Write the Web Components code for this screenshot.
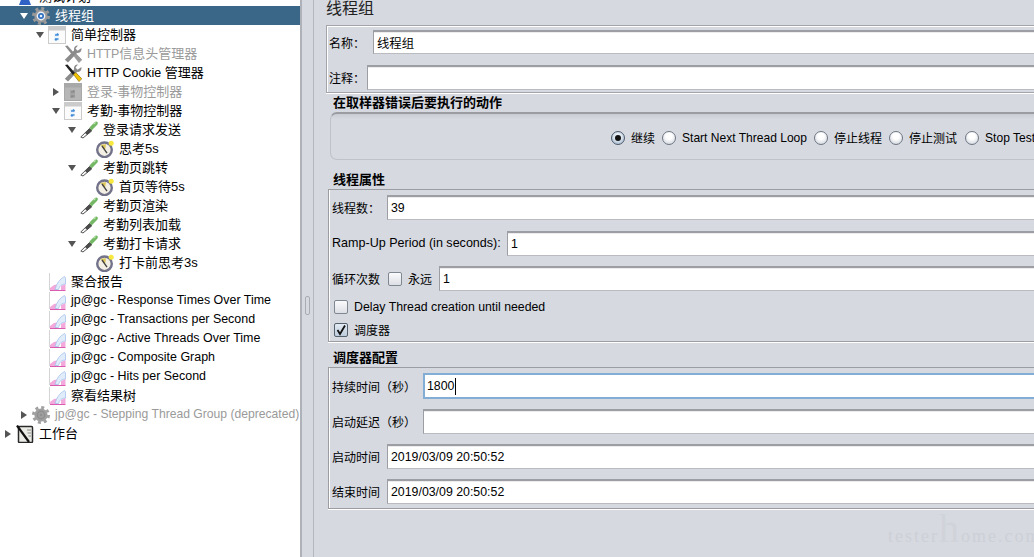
<!DOCTYPE html>
<html lang="zh">
<head>
<meta charset="utf-8">
<title>线程组</title>
<style>
  html, body { margin: 0; height: 100%; overflow: hidden; background: #d6d9e0; }
  body {
    display: flex;
    font: 12px "Liberation Sans", "Noto Sans CJK SC", sans-serif;
    color: #000;
  }
  .lat { font-size: 12.4px; }
</style>
</head>
<body>
<jm-tree>
  <tree-row lvl="0" icon="plan">测试计划</tree-row>
  <tree-row lvl="1" icon="gear" arrow="open" selected>线程组</tree-row>
  <tree-row lvl="2" icon="ctrl" arrow="open">简单控制器</tree-row>
  <tree-row lvl="3" icon="tools" disabled><span class="lat">HTTP</span>信息头管理器</tree-row>
  <tree-row lvl="3" icon="tools"><span class="lat">HTTP Cookie</span> 管理器</tree-row>
  <tree-row lvl="3" icon="ctrl" arrow="closed" disabled>登录-事物控制器</tree-row>
  <tree-row lvl="3" icon="ctrl" arrow="open">考勤-事物控制器</tree-row>
  <tree-row lvl="4" icon="pipette" arrow="open">登录请求发送</tree-row>
  <tree-row lvl="5" icon="timer">思考5s</tree-row>
  <tree-row lvl="4" icon="pipette" arrow="open">考勤页跳转</tree-row>
  <tree-row lvl="5" icon="timer">首页等待5s</tree-row>
  <tree-row lvl="4" icon="pipette">考勤页渲染</tree-row>
  <tree-row lvl="4" icon="pipette">考勤列表加载</tree-row>
  <tree-row lvl="4" icon="pipette" arrow="open">考勤打卡请求</tree-row>
  <tree-row lvl="5" icon="timer">打卡前思考3s</tree-row>
  <tree-row lvl="2" icon="graph">聚合报告</tree-row>
  <tree-row lvl="2" icon="graph" style="font-size:12.45px">jp@gc - Response Times Over Time</tree-row>
  <tree-row lvl="2" icon="graph" style="font-size:12.45px">jp@gc - Transactions per Second</tree-row>
  <tree-row lvl="2" icon="graph" style="font-size:12.45px">jp@gc - Active Threads Over Time</tree-row>
  <tree-row lvl="2" icon="graph" style="font-size:12.45px">jp@gc - Composite Graph</tree-row>
  <tree-row lvl="2" icon="graph" style="font-size:12.45px">jp@gc - Hits per Second</tree-row>
  <tree-row lvl="2" icon="graph">察看结果树</tree-row>
  <tree-row lvl="1" icon="gear" arrow="closed" disabled style="font-size:12.15px">jp@gc - Stepping Thread Group (deprecated)</tree-row>
  <tree-row lvl="0" icon="bench" arrow="closed">工作台</tree-row>
</jm-tree>
<jm-splitter></jm-splitter>
<thread-form></thread-form>

<script>
// icons for the tree, all on an 18x18 box
const icons = {
  plan: `<path d="M3 17 L15 17 L12 9 L6 9 Z" fill="#2f62c4"/><circle cx="9" cy="6" r="3.5" fill="#3a6fd0"/>`,
  gear: `<circle cx="9" cy="9" r="7.6" fill="none" stroke="COL1" stroke-width="2.8" stroke-dasharray="3 2.97"/>
         <circle cx="9" cy="9" r="6.6" fill="COL1"/>
         <circle cx="9" cy="9" r="4.4" fill="COL2"/>
         <circle cx="9" cy="9" r="3" fill="COL3"/>
         <circle cx="9" cy="9" r="1.3" fill="COL2"/>`,
  ctrl: `<rect x=".5" y=".5" width="17" height="17" fill="COL4" stroke="COL5"/>
         <rect x="1" y="1" width="16" height="3.5" fill="COL5"/>
         <rect x="6" y="7" width="5" height="8" fill="COLA"/>
         <path d="M7 9 h3.5 M10.5 9 l-1.5 -1.5 M7 13 h3.5 M7 13 l1.5 1.5" stroke="COL6" stroke-width="1.6" fill="none"/>`,
  tools: `<path d="M14 .5 L11.5 3.5 L13.5 5.8 L17.5 3 Q18 8 13 8 L4 17.5 L.8 14.8 L10 5.5 Q9.5 .5 14 .5 Z" fill="#8b8b8b"/>
          <path d="M1 1 L3.5 .5 L11 9 L9 11 Z" fill="COL7"/>
          <path d="M9.5 10.5 L11.8 8.6 L17.8 14.8 L15 17.6 Z" fill="COL8" stroke="COL9" stroke-width=".6"/>`,
  pipette: `<path d="M.8 16 L9.5 7.5 L11.8 9.8 L3 17 Z" fill="#f6f6f6" stroke="#555" stroke-width="1"/>
            <path d="M5 12 L9.5 7.5 L11.8 9.8 L7.2 14 Z" fill="#4b4b4b"/>
            <path d="M9.5 6.5 L14 1.8 Q16.4 -.2 17.6 1.2 Q18.6 3 16 5 L11.5 9.5 Z" fill="#74b765"/>
            <path d="M13.5 3 L15.5 1.4" stroke="#c4e8b6" stroke-width="1.3"/>`,
  timer: `<circle cx="8.5" cy="9.8" r="7.3" fill="#f3efe4" stroke="#72728a" stroke-width="2.4"/>
          <path d="M4.5 4.8 L10 4.3 L9 10.3 Z" fill="#dcc657"/>
          <path d="M8.9 10.2 L6 6 M8.9 10.2 L11 13.2" stroke="#444" stroke-width="1.4"/>
          <circle cx="15.2" cy="3.2" r="2.5" fill="#f6e93c"/>`,
  graph: `<path d="M1.5 .5 V17" stroke="#aaa" stroke-dasharray="1 1"/>
          <path d="M2 17 H9 L12 11 L6 12 L2 15 Z" fill="#f4a9dc"/>
          <path d="M13 17 H17.5 V11 L13 13 Z" fill="#f4a9dc"/>
          <path d="M7 16.5 Q9.5 7 16.5 3.5 L17.5 5 V11 Q12 11 10.5 16.5 Z" fill="#e1ecfb" stroke="#9dbdea" stroke-width=".7"/>
          <path d="M2 17.5 H17.5" stroke="#d95cae"/>`,
  bench: `<rect x="2.5" y="1.5" width="14" height="16" rx="1" fill="#ecece7" stroke="#2a2a2a" stroke-width="1.5"/>
          <path d="M11 5 h4 M11.5 8 h3.5 M12.5 11 h2.5" stroke="#888"/>
          <path d="M1 .5 L13 17" stroke="#111" stroke-width="2.2"/>`
};

function iconSvg(name, disabled) {
  const on = { COL1:'#9a9a9a', COL2:'#eaf0f7', COL3:'#2f6fc0', COL4:'#fbfbfb', COL5:'#cbcbcb', COL6:'#3f8bd6', COL7:'#222', COL8:'#f2c200', COL9:'#7a6200', COLA:'#eef4fb' };
  const off = { COL1:'#a0a0a0', COL2:'#8f8f8f', COL3:'#a0a0a0', COL4:'#b6b6b6', COL5:'#a8a8a8', COL6:'#8c8c8c', COL7:'#8b8b8b', COL8:'#9a9a9a', COL9:'#8a8a8a', COLA:'#a4a4a4' };
  const map = disabled ? off : on;
  const body = icons[name].replace(/COL[0-9A]/g, c => map[c]);
  return `<svg width="18" height="18" viewBox="0 0 18 18" aria-hidden="true">${body}</svg>`;
}

// 1. Tree
class JmTree extends HTMLElement {
  constructor() {
    super();
    this.attachShadow({ mode: 'open' });
    this.shadowRoot.innerHTML = `
      <style>
        :host { display: block; flex: 0 0 300px; height: 100%; background: #fff; overflow: hidden; }
        .rows { display: flex; flex-direction: column; margin-top: -13px; }
      </style>
      <div class="rows"><slot></slot></div>`;
  }
}
customElements.define('jm-tree', JmTree);

// 2. One row of the tree
class TreeRow extends HTMLElement {
  constructor() {
    super();
    this.attachShadow({ mode: 'open' });
  }
  connectedCallback() {
    const lvl = +this.getAttribute('lvl');
    const arrow = this.getAttribute('arrow');
    const disabled = this.hasAttribute('disabled');
    const tri = arrow === 'open'
      ? `<svg width="10" height="10"><path d="M1 2 H9 L5 8 Z" fill="COLOR"/></svg>`
      : arrow === 'closed'
        ? `<svg width="10" height="10"><path d="M2 1 V9 L8 5 Z" fill="COLOR"/></svg>` : '';
    const triColor = this.hasAttribute('selected') ? '#fff' : '#555';
    this.shadowRoot.innerHTML = `
      <style>
        :host {
          display: flex; align-items: center; height: 19px; flex: none;
          padding-left: ${lvl * 16}px; white-space: nowrap;
          font: 13px "Liberation Sans", "Noto Sans CJK SC", sans-serif;
          color: #000;
        }
        :host([selected]) { background: #3a6787; color: #fff; }
        :host([disabled]) { color: #9a9a9a; }
        .arrow { width: 16px; height: 19px; display: flex; align-items: center; justify-content: center; flex: none; }
        .icon { width: 18px; height: 18px; margin-right: 5px; flex: none; }
        .text { padding-bottom: 2px; }
        svg { display: block; }
      </style>
      <span class="arrow">${tri.replace('COLOR', triColor)}</span>
      <span class="icon">${iconSvg(this.getAttribute('icon'), disabled)}</span>
      <span class="text"><slot></slot></span>`;
  }
}
customElements.define('tree-row', TreeRow);

// 3. Splitter
class JmSplitter extends HTMLElement {
  constructor() {
    super();
    this.attachShadow({ mode: 'open' });
    this.shadowRoot.innerHTML = `
      <style>
        :host {
          display: flex; align-items: center; justify-content: center;
          flex: 0 0 14px; height: 100%; box-sizing: border-box;
          border-left: 2px solid #aeb1b7; border-right: 1px solid #b4b7bd;
          background: #d6d9e0;
        }
        .grip { width: 3px; height: 17px; border: 1px solid #a9acb3; border-radius: 2px; margin-top: 54px; }
      </style>
      <div class="grip"></div>`;
  }
}
customElements.define('jm-splitter', JmSplitter);

// 4. Text field with its label
class JmField extends HTMLElement {
  constructor() {
    super();
    this.attachShadow({ mode: 'open' });
  }
  connectedCallback() {
    const value = this.getAttribute('value') || '';
    const labelW = this.getAttribute('label-w') || '55';
    this.shadowRoot.innerHTML = `
      <style>
        :host { display: flex; align-items: center; height: 25px; }
        :host([focused]) { height: 26px; }
        .label { flex: 0 0 ${labelW}px; white-space: nowrap; }
        .input {
          flex: 1; height: 100%; box-sizing: border-box; background: #fff;
          border: 1px solid #b9bbc0; border-top: 2px solid #9c9ea3;
          border-left-color: #9c9ea3; box-shadow: inset 0 1px 0 #ececec;
          padding: 0 0 0 3px; display: flex; align-items: center; white-space: nowrap;
          font-size: 12.35px;
        }
        :host([focused]) .input { border: 2px solid #82aed6; box-shadow: none; padding-left: 2px; }
        .caret { display: inline-block; width: 1px; height: 17px; background: #000; margin-left: 1px; }
      </style>
      <span class="label"><slot></slot></span>
      <div class="input">${value}${this.hasAttribute('focused') ? '<span class="caret"></span>' : ''}</div>`;
  }
}
customElements.define('jm-field', JmField);

// 5. Radio and checkbox
class JmRadio extends HTMLElement {
  constructor() {
    super();
    this.attachShadow({ mode: 'open' });
    this.shadowRoot.innerHTML = `
      <style>
        :host { display: inline-flex; align-items: center; gap: 6px; white-space: nowrap; }
        .dot {
          width: 14px; height: 14px; box-sizing: border-box; border-radius: 50%; flex: none;
          border: 1px solid #6d7682; background: radial-gradient(circle at 50% 35%, #fff 30%, #dfe2e8 70%, #b4bac4);
          display: flex; align-items: center; justify-content: center;
        }
        :host([checked]) .dot { background: radial-gradient(circle at 50% 40%, #eaf0f7 30%, #a9bdd2 80%); border-color: #4e5b6b; }
        :host([checked]) .dot::after { content: ''; width: 6px; height: 6px; border-radius: 50%; background: #111; }
        .t { padding-bottom: 1px; }
      </style>
      <span class="dot"></span><span class="t"><slot></slot></span>`;
  }
}
customElements.define('jm-radio', JmRadio);

class JmCheck extends HTMLElement {
  constructor() {
    super();
    this.attachShadow({ mode: 'open' });
  }
  connectedCallback() {
    const mark = this.hasAttribute('checked')
      ? `<svg width="12" height="12" viewBox="0 0 12 12"><path d="M2.5 6 L5 10 L10 1.5" fill="none" stroke="#111" stroke-width="1.8"/></svg>` : '';
    this.shadowRoot.innerHTML = `
      <style>
        :host { display: inline-flex; align-items: center; gap: 6px; white-space: nowrap; }
        .box {
          width: 14px; height: 14px; box-sizing: border-box; border: 1px solid #7f8791; border-radius: 2px; flex: none;
          background: linear-gradient(#fbfbfc, #dcdfe5); display: flex; align-items: center; justify-content: center;
        }
        :host([checked]) .box { background: linear-gradient(#e4ebf3, #bccbdc); border-color: #55606d; }
        .t { padding-bottom: 1px; }
      </style>
      <span class="box">${mark}</span><span class="t"><slot></slot></span>`;
  }
}
customElements.define('jm-check', JmCheck);

// 6. Titled etched box
class JmSection extends HTMLElement {
  constructor() {
    super();
    this.attachShadow({ mode: 'open' });
    const title = this.getAttribute('heading') || '';
    this.shadowRoot.innerHTML = `
      <style>
        :host { display: block; margin-left: 2px; }
        h3 { margin: 0 0 0 5px; font-size: 13px; line-height: 18px; height: 18px; font-weight: 700; }
        .box {
          border: 1px solid #9b9da2; box-shadow: 0 1px 0 #fff, inset 1px 0 0 #fff;
          border-right: 0; padding: 5px 0 4px 3px;
          display: flex; flex-direction: column; gap: var(--gap, 10px);
        }
      </style>
      <h3>${title}</h3>
      <div class="box"><slot></slot></div>`;
  }
}
customElements.define('jm-section', JmSection);

// 7. The whole right side
class ThreadForm extends HTMLElement {
  constructor() {
    super();
    this.attachShadow({ mode: 'open' });
    this.shadowRoot.innerHTML = `
      <style>
        :host {
          display: block; flex: none; width: 740px; height: 100%;
          padding-left: 12px; box-sizing: border-box; position: relative;
          white-space: nowrap;
        }
        h2 { margin: 0; font-size: 16px; font-weight: 400; line-height: 18px; height: 25px; color: #222; }
        .names {
          border: 1px solid #a2a4a9; box-shadow: inset 1px 1px 0 #fff, 0 1px 0 #fff;
          border-right: 0; height: 68px; box-sizing: border-box;
          padding: 4px 0 0 2px; display: flex; flex-direction: column; gap: 11px;
        }
        .names .short { height: 24px; }
        .error { margin-top: 1px; }
        .error h3 { margin: 0 0 0 7px; font-size: 13px; line-height: 18px; height: 18px; }
        .rounded {
          margin-left: 4px; height: 48px; border-radius: 7px 0 0 7px; border: 1px solid #bfc2c8; border-right: 0;
          border-top: 2px solid #9a9ca1; background: linear-gradient(#c9ccd3 0, #d6d9e0 5px);
          display: flex; align-items: center; padding: 3px 0 0 280px; box-sizing: border-box;
          gap: 7px;
        }
        .lat { font-size: 12.05px; }
        .last { margin-left: 1px; }
        .props { margin-top: 11px; }
        .sched { margin-top: 7px; }
        .row { display: flex; align-items: center; height: 25px; gap: 8px; }
        .row jm-field { flex: 1; margin-left: -1px; }
        .plain { height: 14px; margin: -1.5px 0 0 2px; display: flex; align-items: center; }
        .delay { font-size: 12.3px; }
        .ramp { font-size: 12.55px; }
        .mark {
          position: absolute; left: 574px; top: 502px; font: 18px "Liberation Serif", serif;
          letter-spacing: 2px; color: #cdd0d7; line-height: 54px;
        }
        .mark span { font-size: 40px; color: #d0d3da; }
      </style>
      <h2>线程组</h2>
      <div class="names">
        <jm-field class="short" value="线程组" label-w="44">名称：</jm-field>
        <jm-field value="" label-w="38">注释：</jm-field>
      </div>
      <div class="error">
        <h3>在取样器错误后要执行的动作</h3>
        <div class="rounded">
          <jm-radio checked>继续</jm-radio>
          <jm-radio class="lat">Start Next Thread Loop</jm-radio>
          <jm-radio>停止线程</jm-radio>
          <jm-radio>停止测试</jm-radio>
          <jm-radio class="lat last">Stop Test Now</jm-radio>
        </div>
      </div>
      <jm-section heading="线程属性" class="props" style="--gap:10.5px">
        <jm-field value="39">线程数：</jm-field>
        <jm-field value="1" label-w="175" class="ramp">Ramp-Up Period (in seconds):</jm-field>
        <div class="row">
          <span>循环次数</span>
          <jm-check>永远</jm-check>
          <jm-field value="1" label-w="0"></jm-field>
        </div>
        <jm-check class="plain delay">Delay Thread creation until needed</jm-check>
        <jm-check class="plain" checked>调度器</jm-check>
      </jm-section>
      <jm-section heading="调度器配置" class="sched">
        <jm-field value="1800" label-w="91" focused>持续时间（秒）</jm-field>
        <jm-field value="" label-w="91">启动延迟（秒）</jm-field>
        <jm-field value="2019/03/09 20:50:52">启动时间</jm-field>
        <jm-field value="2019/03/09 20:50:52">结束时间</jm-field>
      </jm-section>
      <div class="mark">tester<span>h</span>ome.com</div>`;
  }
}
customElements.define('thread-form', ThreadForm);
</script>
</body>
</html>
